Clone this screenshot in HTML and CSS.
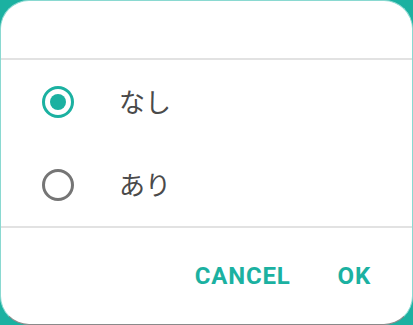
FILE: index.html
```html
<!DOCTYPE html>
<html lang="ja">
<head>
    <meta charset="UTF-8">
    <meta name="viewport" content="width=device-width, initial-scale=1.0">
    <title>選択</title>
    <link rel="stylesheet" href="styles.css">
</head>
<body>
    <div class="dialog">
        <div class="title"></div>
        <div class="options">
            <div class="option">
                <span class="radio checked"></span>
                <span class="label">なし</span>
            </div>
            <div class="option">
                <span class="radio"></span>
                <span class="label">あり</span>
            </div>
        </div>
        <div class="actions">
            <span class="button">CANCEL</span>
            <span class="button">OK</span>
        </div>
    </div>
</body>
</html>
```

FILE: styles.css
```css
html, body {
    margin: 0;
    height: 100%;
}

body {
    background-color: #1bb1a1;
    font-family: Roboto, "Noto Sans CJK JP", sans-serif;
    overflow: hidden;
}

.dialog {
    box-sizing: border-box;
    height: 325px;
    background-color: white;
    border: 1px solid #8ad9d1;
    border-bottom-color: #8a8a8a;
    border-radius: 29px;
    display: flex;
    flex-direction: column;
}

.title {
    height: 57px;
    border-bottom: 2px solid #e2e2e2;
}

.options {
    border-bottom: 2px solid #e2e2e2;
}

.option {
    height: 83px;
    display: flex;
    align-items: center;
    padding-left: 41px;
}

.radio {
    box-sizing: border-box;
    width: 32px;
    height: 32px;
    border: 3px solid #757575;
    border-radius: 50%;
    display: flex;
    align-items: center;
    justify-content: center;
}

.radio.checked {
    border-color: #1bb1a1;
}

.radio.checked::after {
    content: "";
    width: 16px;
    height: 16px;
    border-radius: 50%;
    background-color: #1bb1a1;
}

.label {
    margin-left: 45px;
    margin-top: -3px;
    font-family: "Noto Sans CJK JP", sans-serif;
    font-size: 26px;
    color: #4a4a4a;
}

.actions {
    flex: 1;
    display: flex;
    justify-content: flex-end;
    align-items: center;
    gap: 47px;
    padding-right: 41px;
}

.button {
    font-size: 24px;
    font-weight: bold;
    color: #1bb1a1;
    letter-spacing: 0.8px;
}
```
